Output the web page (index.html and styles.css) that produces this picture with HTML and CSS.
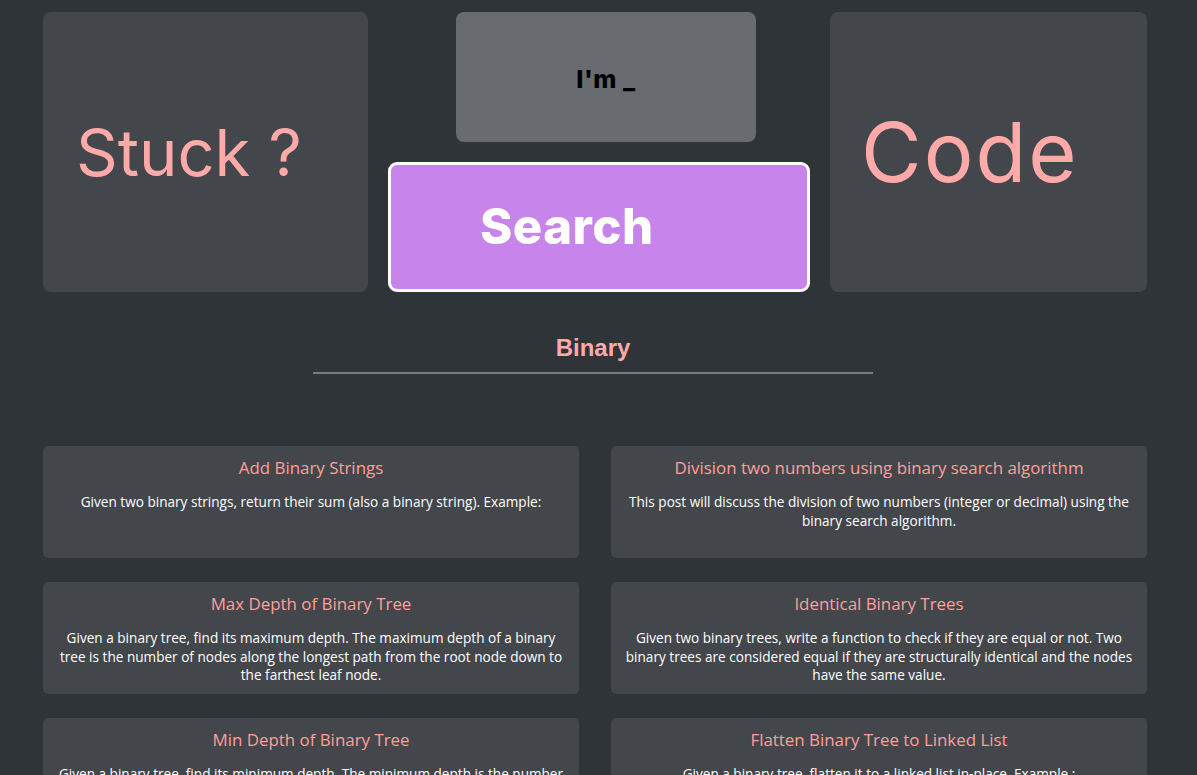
FILE: index.html
```html
<!DOCTYPE html>
<html lang="en">
<head>
<meta charset="utf-8">
<title>Stuck? I'm _ Code</title>
<link rel="stylesheet" href="styles.css">
</head>
<body>
<div class="page">
  <header class="hero">
    <div class="panel panel-left"><span class="stuck">Stuck ?</span></div>
    <div class="middle">
      <div class="im-box"><span class="im">I'm _</span></div>
      <button class="search-btn">Search</button>
    </div>
    <div class="panel panel-right"><span class="code">Code</span></div>
  </header>

  <section class="topic">
    <h2 class="topic-title">Binary</h2>
    <hr class="topic-rule">
  </section>

  <section class="cards">
    <article class="card">
      <h3 class="card-title">Add Binary Strings</h3>
      <p class="card-text">Given two binary strings, return their sum (also a binary string). Example:</p>
    </article>
    <article class="card">
      <h3 class="card-title">Division two numbers using binary search algorithm</h3>
      <p class="card-text">This post will discuss the division of two numbers (integer or decimal) using the binary search algorithm.</p>
    </article>
    <article class="card">
      <h3 class="card-title">Max Depth of Binary Tree</h3>
      <p class="card-text">Given a binary tree, find its maximum depth. The maximum depth of a binary tree is the number of nodes along the longest path from the root node down to the farthest leaf node.</p>
    </article>
    <article class="card">
      <h3 class="card-title">Identical Binary Trees</h3>
      <p class="card-text">Given two binary trees, write a function to check if they are equal or not. Two binary trees are considered equal if they are structurally identical and the nodes have the same value.</p>
    </article>
    <article class="card">
      <h3 class="card-title">Min Depth of Binary Tree</h3>
      <p class="card-text">Given a binary tree, find its minimum depth. The minimum depth is the number of nodes along the shortest path from the root node down to the nearest leaf node.</p>
    </article>
    <article class="card">
      <h3 class="card-title">Flatten Binary Tree to Linked List</h3>
      <p class="card-text">Given a binary tree, flatten it to a linked list in-place. Example :</p>
    </article>
  </section>
</div>
</body>
</html>
```

FILE: styles.css
```css
html, body {
  margin: 0;
  padding: 0;
  background: #2e3437;
}
body {
  font-family: "Open Sans", "Noto Sans", sans-serif;
  color: #ffffff;
}
.page {
  width: 1104px;
  padding: 12px 0 40px 43px;
}
.hero {
  display: flex;
  gap: 20px;
  height: 280px;
}
.panel {
  background: #43464b;
  border-radius: 8px;
  display: flex;
  align-items: center;
  box-sizing: border-box;
}
.panel-left {
  width: 325px;
  padding-left: 33px;
}
.panel-right {
  width: 317px;
  padding-left: 31px;
}
.stuck {
  font-family: "Inter", sans-serif;
  font-size: 65px;
  color: #ffaaa8;
  line-height: 1;
}
.code {
  font-family: "Inter", sans-serif;
  font-size: 83px;
  letter-spacing: 2px;
  color: #ffaaa8;
  line-height: 1;
}
.middle {
  width: 422px;
  display: flex;
  flex-direction: column;
  gap: 20px;
}
.im-box {
  width: 300px;
  height: 130px;
  margin-left: 68px;
  background: #686b70;
  border-radius: 8px;
  display: flex;
  align-items: center;
  justify-content: center;
}
.im {
  font-family: "Inter", sans-serif;
  font-weight: 800;
  font-size: 25px;
  letter-spacing: 0.5px;
  color: #000;
  margin-top: 4px;
}
.search-btn {
  height: 130px;
  width: 422px;
  box-sizing: border-box;
  background: #c785eb;
  border: 3px solid #ffffff;
  border-radius: 9px;
  color: #fff;
  font-family: "Inter", sans-serif;
  font-weight: 800;
  font-size: 49px;
  letter-spacing: 0.5px;
  text-align: left;
  padding: 0 0 2px 89px;
  cursor: pointer;
}
.topic {
  width: 560px;
  margin: 42px auto 0 270px;
}
.topic-title {
  margin: 0;
  text-align: center;
  font-family: "Liberation Sans", Arial, sans-serif;
  font-size: 24px;
  line-height: 28px;
  font-weight: 700;
  color: #ffaaa8;
}
.topic-rule {
  margin: 10px 0 0;
  border: 0;
  height: 2px;
  background: #7a7a7a;
}
.cards {
  margin-top: 72px;
  display: grid;
  grid-template-columns: 536px 536px;
  column-gap: 32px;
  row-gap: 24px;
}
.card {
  background: #43464b;
  border-radius: 5px;
  height: 112px;
  box-sizing: border-box;
  padding: 10px 12px;
  text-align: center;
  overflow: hidden;
}
.card-title {
  margin: 0;
  font-size: 16.9px;
  line-height: 24px;
  font-weight: 400;
  color: #ff9f9b;
}
.card-text {
  margin: 13px 0 0;
  font-size: 13.6px;
  line-height: 18.6px;
  color: #ffffff;
}
```
